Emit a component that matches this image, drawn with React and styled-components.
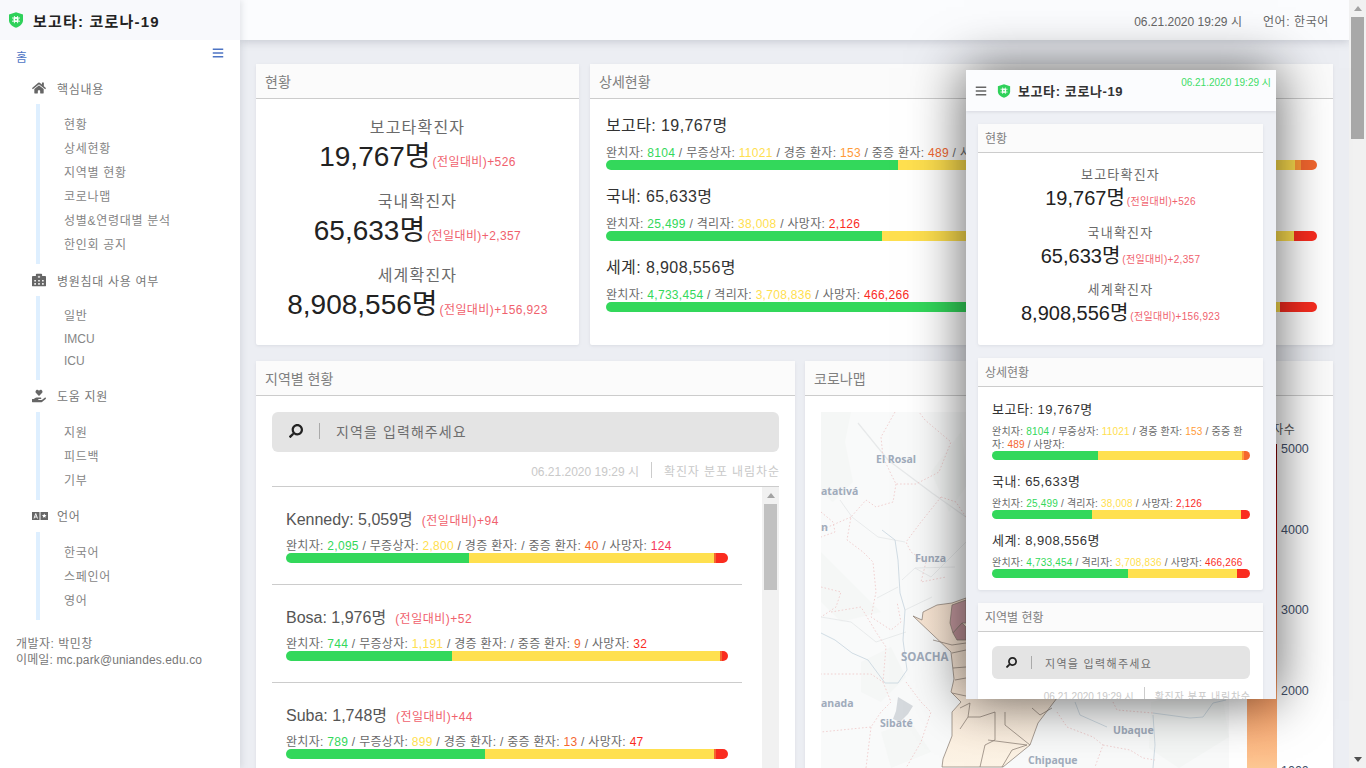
import React from "react";
import styled, { createGlobalStyle } from "styled-components";
import { FaHome, FaHospitalAlt, FaHandHoldingHeart, FaSearch, FaBars } from "react-icons/fa";

const FONT = '"Liberation Sans", "Noto Sans CJK KR", sans-serif';
const C = { green: "#33d85b", yellow: "#ffe04f", orange: "#ff9b38", deep: "#f4672f", red: "#fa2c1f", pink: "#f5365c" };

const Global = createGlobalStyle`
  html, body { margin: 0; padding: 0; height: 768px; overflow: hidden; background: #eceef3; }
  * { box-sizing: border-box; }
  body { font-family: ${FONT}; color: #666; }
`;

const Shell = styled.div`display: flex; width: 1366px; height: 768px; overflow: hidden; position: relative;`;

/* ---------- sidebar ---------- */
const Side = styled.aside`width: 240px; flex: none; background: #fff; display: flex; flex-direction: column; z-index: 2; box-shadow: 2px 0 6px rgba(120,125,140,.18);`;
const Brand = styled.div`height: 40px; background: #f8f9fc; display: flex; align-items: center; padding-left: 8px; gap: 9px; font-weight: 700; font-size: 15px; color: #222; letter-spacing: 1.2px;`;
const HomeRow = styled.div`height: 32px; display: flex; justify-content: space-between; align-items: center; padding: 0 16px; font-size: 12px; color: #4d74c4;`;
const MenuGlyph = styled(FaBars)`width: 12px; height: 12px; color: #4d74c4; margin-top: -6px;`;
const GroupHead = styled.div`height: 32px; margin-left: 32px; display: flex; align-items: center; font-size: 12px; color: #777; font-weight: 400; letter-spacing: .7px;`;
const HeadIcon = styled.span`width: 25px; flex: none; display: flex; align-items: center; color: #666; font-size: 14px;`;
const SubList = styled.ul`list-style: none; margin: 0 0 0 36px; padding: 8px 0 8px 24px; border-left: 4px solid #deefff;`;
const SubItem = styled.li`height: ${p => p.$h}px; line-height: ${p => p.$h + 2}px; font-size: 12px; color: #858585; letter-spacing: ${p => p.$latin ? 0 : .7}px;`;
const Credits = styled.div`padding: 16px 16px 0; font-size: 12px; line-height: 16px; color: #777;`;
const CreditLine = styled.div`letter-spacing: ${p => p.$ls}px; white-space: nowrap;`;

/* ---------- main ---------- */
const Main = styled.main`width: 1109px; flex: none; display: flex; flex-direction: column; background: #eceef3;`;
const TopBar = styled.header`height: 40px; flex: none; background: #fbfcfe; box-shadow: 0 2px 8px rgba(120,125,140,.3); display: flex; justify-content: flex-end; align-items: center; gap: 21px; padding-right: 20px; font-size: 12px; color: #666;`;
const TopLang = styled.span`letter-spacing: .6px;`;
const Grid = styled.div`padding: 24px 16px 0; display: flex; flex-direction: column; gap: 16px;`;
const Row = styled.div`display: grid; grid-template-columns: ${p => p.$cols}; gap: ${p => p.$gap}px; height: ${p => p.$h}px;`;
const Card = styled.section`background: #fff; border-radius: 2px; display: flex; flex-direction: column; box-shadow: 0 1px 3px rgba(120,125,140,.15); min-width: 0;`;
const CardHead = styled.div`height: ${p => p.$small ? 29 : 35}px; flex: none; background: #fbfbfb; border-bottom: 1px solid #ccc; display: flex; align-items: center; padding: 0 0 1px ${p => p.$small ? 7 : 9}px; font-size: ${p => p.$small ? 12 : 14}px; color: #808080;`;

const StatsBody = styled.div`padding-top: ${p => p.$small ? 12 : 17}px; text-align: center;`;
const StatBlock = styled.div`height: ${p => p.$small ? 57.5 : 74}px;`;
const StatLabel = styled.div`font-size: ${p => p.$small ? 13 : 16}px; line-height: ${p => p.$small ? 20 : 24}px; color: #6a6a6a; letter-spacing: 1.2px;`;
const StatValue = styled.div`font-size: ${p => p.$small ? 20 : 28}px; line-height: ${p => p.$small ? 26 : 33}px; color: #222;`;
const Delta = styled.span`font-size: ${p => p.$small ? 10 : 12}px; color: #f0616d; margin-left: 2px; letter-spacing: ${p => p.$small ? .3 : .4}px;`;

const DetailBody = styled.div`padding: ${p => p.$small ? "12.5px 13px 0 14px" : "16px 16px 0"};`;
const DetailStack = styled.div`margin-bottom: ${p => p.$small ? 11.5 : 16}px;`;
const DetailTitle = styled.div`font-size: ${p => p.$small ? 13 : 16}px; line-height: ${p => p.$small ? 20 : 22}px; color: #333; margin-bottom: ${p => p.$small ? 5.5 : 9}px; letter-spacing: ${p => p.$small ? .5 : .4}px;`;
const Line = styled.div`font-size: ${p => p.$small ? 10 : 12}px; line-height: ${p => p.$small ? 13 : 14}px; color: #6a6a6a; letter-spacing: ${p => p.$small ? .2 : .3}px; white-space: ${p => p.$small ? "normal" : "nowrap"}; line-break: anywhere;`;
const Num = styled.span`color: ${p => p.$c};`;
const Bar = styled.div`display: flex; height: ${p => p.$h}px; border-radius: ${p => p.$h / 2}px; overflow: hidden; width: ${p => p.$w ? p.$w + "px" : "100%"};`;
const Seg = styled.div`height: 100%; background: ${p => p.$c};`;

/* ---------- regions ---------- */
const RegionBody = styled.div`padding: ${p => p.$small ? "14px 13px 0 14px" : "16px 16px 0"}; display: flex; flex-direction: column;`;
const Search = styled.div`height: ${p => p.$small ? 33 : 40}px; background: #e4e4e4; border-radius: 6px; display: flex; align-items: center; padding: 0 0 ${p => p.$small ? 0 : 2}px ${p => p.$small ? 14 : 17}px; font-size: ${p => p.$small ? 11 : 14}px; color: #6e6e6e; letter-spacing: ${p => p.$small ? 1.3 : 1.1}px;`;
const SearchGlyph = styled(FaSearch)`width: ${p => p.$small ? 11 : 14}px; height: ${p => p.$small ? 11 : 14}px; color: #222; transform: scaleX(-1);`;
const SearchSep = styled.span`width: 1px; height: ${p => p.$small ? 13 : 16}px; background: #aaa; margin: 0 ${p => p.$small ? 13 : 16}px 0 ${p => p.$small ? 14 : 16}px;`;
const Meta = styled.div`height: ${p => p.$small ? 30 : 34}px; padding-top: 2px; display: flex; justify-content: flex-end; align-items: center; font-size: ${p => p.$small ? 10 : 12}px; color: #c9c9c9; flex: none;`;
const MetaNote = styled.span`letter-spacing: ${p => p.$small ? .7 : .9}px; margin-right: ${p => p.$small ? -.7 : -.9}px;`;
const MetaSep = styled.span`width: 1px; height: 16px; background: #ccc; margin: 0 ${p => p.$small ? 10 : 12}px;`;
const ListFrame = styled.div`border-top: 1px solid #ccc; display: flex; height: 300px;`;
const List = styled.div`width: 490px; flex: none;`;
const Region = styled.div`width: 470px; height: 98px; padding: 21px 0 0 14px; border-bottom: 1px solid #ccc; &:last-child { border-bottom: 0; }`;
const RegionTitle = styled.div`font-size: 16px; line-height: 24px; color: #555; margin-bottom: 6px; white-space: nowrap;`;
const RegionDelta = styled.span`font-size: 12px; color: #f0616d; margin-left: 9px; letter-spacing: .5px;`;
const Scroll = styled.div`flex: none; background: #f1f1f1; display: flex; flex-direction: column; align-items: center; width: ${p => p.$w}px; height: 100%;`;
const Arrow = styled.span`width: 0; height: 0; border-left: 4px solid transparent; border-right: 4px solid transparent; ${p => p.$down ? "border-top: 5px solid #505050;" : "border-bottom: 5px solid #a3a3a3;"} margin: 6px 0;`;
const Thumb = styled.div`width: 100%; height: ${p => p.$h}px; background: ${p => p.$c}; flex: none;`;
const Spacer = styled.div`flex: 1;`;
const ThumbWrap = styled.div`padding: 0 2px; width: 100%;`;

/* ---------- map ---------- */
const MapBody = styled.div`padding: 16px 0 0 16px; display: flex; gap: 18px;`;
const MapArt = styled.svg`width: 408px; height: 356px; flex: none; display: block;`;
const MapLabel = styled.text`font-family: "Open Sans", "Liberation Sans", sans-serif; font-weight: 700; font-size: ${p => p.$s || 10.5}px; fill: #a0abbb;`;
const Legend = styled.div`width: 86px; flex: none;`;
const LegendTitle = styled.div`padding-top: 6px; height: 29px; line-height: 25px; font-size: 12px; color: #555; white-space: nowrap; text-align: right; margin-right: 38px; letter-spacing: .3px;`;
const LegendRow = styled.div`display: flex; gap: 4px;`;
const Ramp = styled.div`width: 30px; height: 340px; margin-top: 3px; background: linear-gradient(#7f0000 0%, #a80808 18%, #cf2a1c 38%, #ec6a40 55%, #f99b62 72%, #fdc08c 92%, #fdd49e 100%);`;
const Ticks = styled.div`display: flex; flex-direction: column;`;
const Tick = styled.div`height: 80.5px; line-height: 16px; font-size: 12.5px; color: #445069;`;

/* ---------- phone preview ---------- */
const Phone = styled.div`position: absolute; left: 966px; top: 70px; width: 310px; height: 629px; overflow: hidden; background: #eef0f5; box-shadow: 0 0 50px 2px rgba(0,0,0,.6); z-index: 5; display: flex; flex-direction: column;`;
const PhoneBar = styled.div`height: 41px; flex: none; background: #fbfcfe; position: relative; display: flex; align-items: center; padding: 0 0 0 9px; font-size: 13px; font-weight: 700; color: #333; box-shadow: 0 1px 3px rgba(120,125,140,.2);`;
const PhoneBurger = styled(FaBars)`width: 12px; height: 12px; color: #666; margin-right: 10px;`;
const PhoneTitle = styled.span`margin-left: 7px; letter-spacing: .6px;`;
const PhoneTime = styled.span`position: absolute; top: 4px; right: 5px; font-size: 10px; font-weight: 400; color: #3fdc68;`;
const PhoneScroll = styled.div`padding: 13px 13px 0 12px; display: flex; flex-direction: column; gap: 13px;`;
const PhoneCard = styled(Card)`height: ${p => p.$h}px; flex: none;`;

/* ---------- page scrollbar ---------- */
const PageBar = styled.div`width: 17px; flex: none; background: #f1f1f1; display: flex; flex-direction: column; align-items: center;`;

const Shield = ({ size = 16 }) => (
  <svg width={size} height={size} viewBox="0 0 16 16" aria-hidden="true">
    <path d="M8 .3 15 2.6v5.6c0 3.6-3 6.2-7 7.5-4-1.3-7-3.9-7-7.5V2.6z" fill="#2fd15a" />
    <circle cx="8" cy="7.6" r="2.5" fill="#fff" />
    <path d="M4 6h8M4 9.2h8M6.4 4v7.2M9.6 4v7.2" stroke="#fff" strokeWidth=".9" />
    <circle cx="8" cy="7.6" r=".9" fill="#2fd15a" />
  </svg>
);

const LanguageIcon = () => (
  <svg width="16" height="12" viewBox="0 0 16 12" aria-hidden="true">
    <rect x="0" y="2" width="7.5" height="8" fill="#666" />
    <rect x="8.5" y="2" width="7.5" height="8" fill="#666" />
    <path d="M2 8.5 3.75 3.5 5.5 8.5M2.7 7h2.1" stroke="#fff" strokeWidth=".9" fill="none" />
    <path d="m12.25 3.4.7 1.5 1.6.2-1.2 1.1.3 1.6-1.4-.8-1.4.8.3-1.6-1.2-1.1 1.6-.2z" fill="#fff" />
  </svg>
);

const bar = (...parts) => parts;
const TOTALS = [
  { name: "보고타확진자", value: "19,767명", delta: "(전일대비)+526" },
  { name: "국내확진자", value: "65,633명", delta: "(전일대비)+2,357" },
  { name: "세계확진자", value: "8,908,556명", delta: "(전일대비)+156,923" },
];
const DETAILS = [
  {
    title: "보고타: 19,767명",
    stats: [["완치자", "8104", C.green], ["무증상자", "11021", C.yellow], ["경증 환자", "153", C.orange], ["중증 환자", "489", C.deep], ["사망자", "", C.red]],
    bar: bar([41, C.green], [55.9, C.yellow], [.8, C.orange], [2.3, C.deep]),
  },
  {
    title: "국내: 65,633명",
    stats: [["완치자", "25,499", C.green], ["격리자", "38,008", C.yellow], ["사망자", "2,126", C.red]],
    bar: bar([38.8, C.green], [57.9, C.yellow], [3.3, C.red]),
  },
  {
    title: "세계: 8,908,556명",
    stats: [["완치자", "4,733,454", C.green], ["격리자", "3,708,836", C.yellow], ["사망자", "466,266", C.red]],
    bar: bar([52.9, C.green], [41.9, C.yellow], [5.2, C.red]),
  },
];
const REGIONS = [
  {
    title: "Kennedy: 5,059명", delta: "(전일대비)+94",
    stats: [["완치자", "2,095", C.green], ["무증상자", "2,800", C.yellow], ["경증 환자", "", C.orange], ["중증 환자", "40", C.deep], ["사망자", "124", C.pink]],
    bar: bar([41.4, C.green], [55.4, C.yellow], [.5, C.deep], [2.7, C.red]),
  },
  {
    title: "Bosa: 1,976명", delta: "(전일대비)+52",
    stats: [["완치자", "744", C.green], ["무증상자", "1,191", C.yellow], ["경증 환자", "", C.orange], ["중증 환자", "9", C.deep], ["사망자", "32", C.red]],
    bar: bar([37.6, C.green], [60.6, C.yellow], [.4, C.deep], [1.4, C.red]),
  },
  {
    title: "Suba: 1,748명", delta: "(전일대비)+44",
    stats: [["완치자", "789", C.green], ["무증상자", "899", C.yellow], ["경증 환자", "", C.orange], ["중증 환자", "13", C.deep], ["사망자", "47", C.red]],
    bar: bar([45, C.green], [51.8, C.yellow], [.6, C.deep], [2.6, C.red]),
  },
];

const StatLine = ({ stats, small }) => (
  <Line $small={small}>
    {stats.map(([label, n, c], i) => (
      <React.Fragment key={label}>
        {i > 0 && " / "}
        {label}: <Num $c={c}>{n}</Num>
      </React.Fragment>
    ))}
  </Line>
);

const Progress = ({ parts, h, w }) => (
  <Bar $h={h} $w={w}>
    {parts.map(([pct, c], i) => <Seg key={i} $c={c} style={{ width: pct + "%" }} />)}
  </Bar>
);

const Totals = ({ small }) => (
  <StatsBody $small={small}>
    {TOTALS.map(t => (
      <StatBlock key={t.name} $small={small}>
        <StatLabel $small={small}>{t.name}</StatLabel>
        <StatValue $small={small}>{t.value}<Delta $small={small}>{t.delta}</Delta></StatValue>
      </StatBlock>
    ))}
  </StatsBody>
);

const Details = ({ small }) => (
  <DetailBody $small={small}>
    {DETAILS.map(d => (
      <DetailStack key={d.title} $small={small}>
        <DetailTitle $small={small}>{d.title}</DetailTitle>
        <StatLine stats={d.stats} small={small} />
        <Progress parts={d.bar} h={small ? 9 : 10} />
      </DetailStack>
    ))}
  </DetailBody>
);

const MapDrawing = () => (
  <MapArt viewBox="0 0 408 356" role="img" aria-label="코로나맵">
    <defs>
      <linearGradient id="cityFade" x1="0" y1="0" x2="0" y2="1">
        <stop offset="0" stopColor="#f8e4d2" />
        <stop offset=".55" stopColor="#fae9d8" />
        <stop offset="1" stopColor="#fdf4e6" />
      </linearGradient>
    </defs>
    <rect width="408" height="356" fill="#f9fafa" />
    <g fill="#f5f7f6">
      <path d="M0 0h30l-6 30 8 40-20 20-12-10z" />
      <path d="M110 60l30-40 8 50-20 30z" />
      <path d="M0 140l30 30 30 30-40 10-20-20z" />
      <path d="M40 250l30-15 15 30-25 25-20-10z" />
      <path d="M330 290l70-15 8 50-50 31-30-20z" />
      <path d="M60 320l30-10 20 30-40 16z" />
    </g>
    <g fill="none" stroke="#e7e9ea" strokeWidth=".9">
      <path d="M37 11 67 48l44 33 34 24" strokeWidth="1.2" />
      <path d="M19 88l12 17 26 20 27 5" />
      <path d="M81 168l13-12 40-1M56 186l21-11M84 198l27-13" />
      <path d="M145 130 110 165 94 156" />
      <path d="M0 205l30 5 25 20 30-10" />
    </g>
    <g fill="none" stroke="#ccd8e1" strokeWidth=".9">
      <path d="M61 118l13 10 3 20 2 33 5 17-2 30 4 30-9 13H64l-17-23-16-7-17-13-14-7" />
      <path d="m254 290 5 13 27 12" />
      <path d="m332 303 2 30-2 23M332 301l37 5 13-1 10-14 13-3" />
    </g>
    <g fill="none" stroke="#efcccc" strokeWidth=".9" strokeDasharray="1.6 2">
      <path d="M74 0 60 25l2 20 8 17 5 10h20l23-12 12-30-26-22-6-8" />
      <path d="M75 72 72 90 55 95l-10-7-15 17-4 23 16 12 10 10 3 30-5 25 20 13 10-8-4-20" />
      <path d="M0 100l12 10 2 10-14 5M30 105 0 118" />
      <path d="m120 85-20 25-15 20 5 10 15 10-5 20 25-5M120 85l15 5 10 15" />
      <path d="M0 175l20 5-5 15-15 10M10 200l30-5 15 25 10 15-3 35-12-8H0" />
      <path d="m62 270 8 20-10 10-10 15-50 5M50 315l-5 41M85 270l15 20 10 10-10 30-15 26" />
      <path d="m236 300 10 15 26 10 10 8-8 22M282 333l27 5 13 8 12 2M292 290l4 8 36 3" />
      <path d="m131 325 30 3 45 5" />
    </g>
    <g stroke="#85796e" strokeWidth=".7" strokeLinejoin="round">
      <path d="M101 208l1-8 14-7 15-2 14-5 10 100h81l-19 25-8 22-27 22h-61l1-8 9-23v-24l9-10-10-10 3-13-3-27-19-18-19-18z" fill="url(#cityFade)" />
      <path d="M131 193l14-5v23h-4l-9 10-3-10z" fill="#c89ca2" />
      <path d="M132 221l9-10 4 4v13h-9z" fill="#bf9298" />
      <path d="M112 228l19 5 14-2M131 241l14-3M132 256l13-1M134 268l11-2M131 281l14 3" fill="none" />
      <path d="m139 296 10-5-2 14h12l15-5v28l-10 5-5 22M184 300v13l25 20M211 296l8 7 12-7M167 328l39 5-15 5-10 17M147 305l-8 12" fill="none" />
    </g>
    <path d="M77 285l15 9-5 8-8 8-7-3 3-8z" fill="#d5d9dd" />
    <MapLabel x="55" y="51">El Rosal</MapLabel>
    <MapLabel x="0" y="83">atativá</MapLabel>
    <MapLabel x="0" y="119">n</MapLabel>
    <MapLabel x="94" y="150">Funza</MapLabel>
    <MapLabel x="80" y="249" $s="11.5">SOACHA</MapLabel>
    <MapLabel x="0" y="295">anada</MapLabel>
    <MapLabel x="59" y="315">Sibaté</MapLabel>
    <MapLabel x="292" y="322">Ubaque</MapLabel>
    <MapLabel x="207" y="352">Chipaque</MapLabel>
  </MapArt>
);

export default function App() {
  return (
    <Shell>
      <Global />
      <Side>
        <Brand><Shield /><span>보고타: 코로나-19</span></Brand>
        <HomeRow>홈<MenuGlyph /></HomeRow>
        <GroupHead><HeadIcon><FaHome /></HeadIcon>핵심내용</GroupHead>
        <SubList>
          {["현황", "상세현황", "지역별 현황", "코로나맵", "성별&연령대별 분석", "한인회 공지"].map(s => <SubItem key={s} $h={24}>{s}</SubItem>)}
        </SubList>
        <GroupHead><HeadIcon><FaHospitalAlt /></HeadIcon>병원침대 사용 여부</GroupHead>
        <SubList>
          <SubItem $h={22.67}>일반</SubItem>
          <SubItem $h={22.67} $latin>IMCU</SubItem>
          <SubItem $h={22.67} $latin>ICU</SubItem>
        </SubList>
        <GroupHead><HeadIcon><FaHandHoldingHeart /></HeadIcon>도움 지원</GroupHead>
        <SubList>
          {["지원", "피드백", "기부"].map(s => <SubItem key={s} $h={24}>{s}</SubItem>)}
        </SubList>
        <GroupHead><HeadIcon><LanguageIcon /></HeadIcon>언어</GroupHead>
        <SubList>
          {["한국어", "스페인어", "영어"].map(s => <SubItem key={s} $h={24}>{s}</SubItem>)}
        </SubList>
        <Credits>
          <CreditLine $ls={.5}>개발자: 박민창</CreditLine>
          <CreditLine $ls={.12}>이메일: mc.park@uniandes.edu.co</CreditLine>
        </Credits>
      </Side>

      <Main>
        <TopBar><span>06.21.2020 19:29 시</span><TopLang>언어: 한국어</TopLang></TopBar>
        <Grid>
          <Row $cols="323px 743px" $gap={11} $h={281}>
            <Card>
              <CardHead>현황</CardHead>
              <Totals />
            </Card>
            <Card>
              <CardHead>상세현황</CardHead>
              <Details />
            </Card>
          </Row>
          <Row $cols="539px 528px" $gap={10} $h={440}>
            <Card>
              <CardHead>지역별 현황</CardHead>
              <RegionBody>
                <Search><SearchGlyph /><SearchSep />지역을 입력해주세요</Search>
                <Meta>06.21.2020 19:29 시<MetaSep /><MetaNote>확진자 분포 내림차순</MetaNote></Meta>
                <ListFrame>
                  <List>
                    {REGIONS.map(r => (
                      <Region key={r.title}>
                        <RegionTitle>{r.title}<RegionDelta>{r.delta}</RegionDelta></RegionTitle>
                        <StatLine stats={r.stats} />
                        <Progress parts={r.bar} h={10} w={442} />
                      </Region>
                    ))}
                  </List>
                  <Spacer />
                  <Scroll $w={17}>
                    <Arrow />
                    <ThumbWrap><Thumb $h={86} $c="#c1c1c1" /></ThumbWrap>
                  </Scroll>
                </ListFrame>
              </RegionBody>
            </Card>
            <Card>
              <CardHead>코로나맵</CardHead>
              <MapBody>
                <MapDrawing />
                <Legend>
                  <LegendTitle>확진자수</LegendTitle>
                  <LegendRow>
                    <Ramp />
                    <Ticks>
                      {[5000, 4000, 3000, 2000, 1000].map(t => <Tick key={t}>{t}</Tick>)}
                    </Ticks>
                  </LegendRow>
                </Legend>
              </MapBody>
            </Card>
          </Row>
        </Grid>
      </Main>

      <PageBar>
        <Arrow />
        <ThumbWrap><Thumb $h={122} $c="#a8a8a8" /></ThumbWrap>
        <Spacer />
        <Arrow $down />
      </PageBar>

      <Phone>
        <PhoneBar>
          <PhoneBurger />
          <Shield size={14} />
          <PhoneTitle>보고타: 코로나-19</PhoneTitle>
          <PhoneTime>06.21.2020 19:29 시</PhoneTime>
        </PhoneBar>
        <PhoneScroll>
          <PhoneCard $h={221}>
            <CardHead $small>현황</CardHead>
            <Totals small />
          </PhoneCard>
          <PhoneCard $h={232}>
            <CardHead $small>상세현황</CardHead>
            <Details small />
          </PhoneCard>
          <PhoneCard $h={140}>
            <CardHead $small>지역별 현황</CardHead>
            <RegionBody $small>
              <Search $small><SearchGlyph $small /><SearchSep $small />지역을 입력해주세요</Search>
              <Meta $small>06.21.2020 19:29 시<MetaSep $small /><MetaNote $small>확진자 분포 내림차순</MetaNote></Meta>
            </RegionBody>
          </PhoneCard>
        </PhoneScroll>
      </Phone>
    </Shell>
  );
}
